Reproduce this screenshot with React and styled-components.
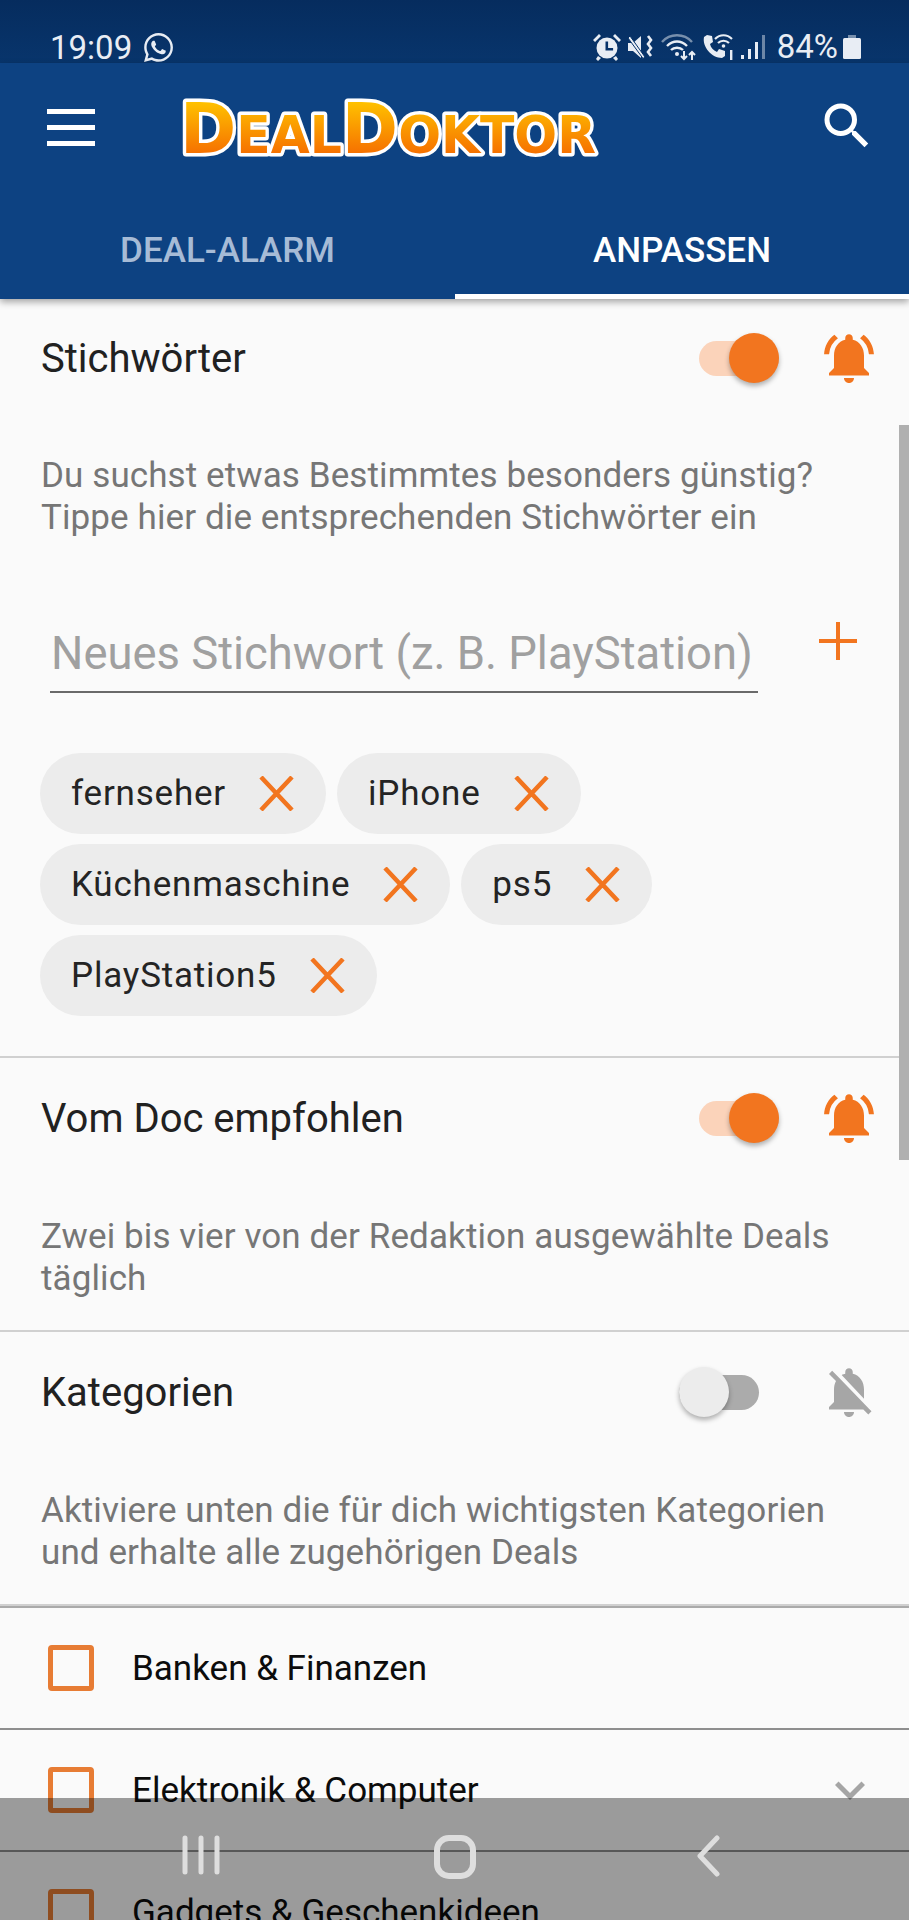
import React from "react";
import styled, { createGlobalStyle } from "styled-components";
import { FaWhatsapp } from "react-icons/fa";
import {
  MdKeyboardArrowDown,
  MdNotificationsActive,
  MdNotificationsOff,
  MdSearch,
} from "react-icons/md";

const orange = "#f2751f";

const GlobalStyle = createGlobalStyle`
  html, body {
    margin: 0;
    padding: 0;
    background: #fafafa;
  }
  * {
    box-sizing: border-box;
  }
`;

const Screen = styled.div`
  position: relative;
  width: 909px;
  height: 1920px;
  overflow: hidden;
  background: #fafafa;
  font-family: Roboto, "Liberation Sans", sans-serif;
`;

const StatusBar = styled.div`
  height: 63px;
  padding: 30px 48px 0 50px;
  display: flex;
  align-items: flex-start;
  background: linear-gradient(#062c5e, #08356c);
  color: #e8edf4;
`;

const Clock = styled.span`
  font-size: 33px;
  line-height: 36px;
  margin-right: 10px;
`;

const StatusIcons = styled.div`
  margin-left: auto;
  display: flex;
  align-items: center;
  height: 34px;
  gap: 5px;
`;

const Battery = styled.span`
  font-size: 33px;
  line-height: 34px;
  margin-left: 6px;
`;

const AppBar = styled.header`
  position: relative;
  z-index: 2;
  background: #0d4282;
  box-shadow: 0 3px 7px rgba(0, 0, 0, 0.35);
`;

const TopRow = styled.div`
  height: 152px;
  padding: 24px 32px 0 47px;
  display: flex;
  align-items: flex-start;
`;

const MenuButton = styled.div`
  width: 48px;
  margin-top: 22px;
  display: flex;
  flex-direction: column;
  gap: 11px;
  span {
    display: block;
    height: 5px;
    background: #fff;
  }
`;

const Logo = styled.svg`
  margin-left: 82px;
`;

const SearchButton = styled.div`
  margin-left: auto;
  margin-top: 9px;
  color: #fff;
  display: flex;
`;

const Tabs = styled.div`
  height: 84px;
  display: grid;
  grid-template-columns: 455px 454px;
`;

const Tab = styled.div`
  display: flex;
  align-items: center;
  justify-content: center;
  padding: 0 0 9px;
  font-size: 35px;
  font-weight: 500;
  color: ${(p) => (p.$active ? "#fff" : "#a6bbd6")};
  border-bottom: 5px solid ${(p) => (p.$active ? "#fff" : "transparent")};
`;

const Section = styled.section`
  padding-bottom: ${(p) => p.$bottom || 30}px;
  border-bottom: 2px solid #d0d0d0;
`;

const TitleRow = styled.div`
  height: ${(p) => p.$height || 120}px;
  padding: 0 30px 0 41px;
  display: flex;
  align-items: center;
`;

const Title = styled.div`
  font-size: 40px;
  color: #212121;
  flex: 1;
`;

const Toggle = styled.div`
  position: relative;
  width: 80px;
  height: 35px;
  margin-right: ${(p) => (p.$on ? "0" : "20px")};
  border-radius: 18px;
  background: ${(p) => (p.$on ? "#fbd3ba" : "#ababab")};
`;

const Thumb = styled.div`
  position: absolute;
  top: -8px;
  left: ${(p) => (p.$on ? "30px" : "0")};
  width: 50px;
  height: 50px;
  border-radius: 50%;
  background: ${(p) => (p.$on ? orange : "#ececec")};
  box-shadow: 0 3px 5px rgba(0, 0, 0, 0.3);
`;

const BellSlot = styled.div`
  width: 60px;
  margin-left: 40px;
  display: flex;
  color: ${(p) => (p.$on ? orange : "#a6a6a6")};
`;

const Description = styled.p`
  margin: 38px 0 0;
  padding: 0 30px 0 41px;
  font-size: 35px;
  line-height: 42px;
  letter-spacing: 0.1px;
  color: #767676;
`;

const InputRow = styled.div`
  margin-top: 88px;
  padding: 0 52px 0 50px;
  display: flex;
  align-items: flex-start;
  justify-content: space-between;
`;

const InputField = styled.div`
  width: 708px;
  height: 66px;
  padding-left: 1px;
  font-size: 45.4px;
  line-height: 54px;
  color: #a0a0a0;
  border-bottom: 2px solid #6a6a6a;
  white-space: nowrap;
`;

const PlusIcon = styled.svg`
  margin-top: -5px;
`;

const Chips = styled.div`
  margin-top: 60px;
  padding: 0 40px;
  display: flex;
  flex-wrap: wrap;
  gap: 10px 11px;
`;

const Chip = styled.div`
  height: 81px;
  padding: 0 32px 0 31px;
  display: flex;
  align-items: center;
  gap: 33px;
  border-radius: 41px;
  background: #ececec;
  font-size: 35px;
  letter-spacing: 0.8px;
  color: #242424;
`;

const ChipClose = styled.svg`
  flex: none;
`;

const CategoryList = styled.div`
  border-top: 2px solid #aaa;
`;

const CategoryRow = styled.div`
  height: 122px;
  padding: 0 29px 0 48px;
  display: flex;
  align-items: center;
  border-bottom: 2px solid #8e8e8e;
`;

const CheckBox = styled.div`
  width: 46px;
  height: 46px;
  border: 5px solid #e77c34;
  border-radius: 4px;
`;

const CategoryLabel = styled.div`
  margin-left: 38px;
  flex: 1;
  font-size: 35px;
  color: #0c0c0c;
`;

const Chevron = styled.span`
  display: flex;
  color: #a5a5a5;
`;

const ScrollBar = styled.div`
  position: absolute;
  top: 425px;
  right: 0;
  width: 10px;
  height: 735px;
  background: #b0b0b0;
`;

const NavBar = styled.nav`
  position: absolute;
  left: 0;
  right: 0;
  bottom: 0;
  height: 122px;
  padding: 37px 0 0 182px;
  display: flex;
  align-items: flex-start;
  gap: 214px;
  background: rgba(0, 0, 0, 0.38);
  color: #dedede;
`;

const BackIcon = styled.svg`
  margin-left: 6px;
`;

const keywords = ["fernseher", "iPhone", "Küchenmaschine", "ps5", "PlayStation5"];
const categories = [
  { name: "Banken & Finanzen" },
  { name: "Elektronik & Computer", expandable: true },
  { name: "Gadgets & Geschenkideen" },
];

const AlertSection = ({ title, on, height, bottom, children }) => (
  <Section $bottom={bottom}>
    <TitleRow $height={height}>
      <Title>{title}</Title>
      <Toggle $on={on}>
        <Thumb $on={on} />
      </Toggle>
      <BellSlot $on={on}>
        {on ? <MdNotificationsActive size={60} /> : <MdNotificationsOff size={60} />}
      </BellSlot>
    </TitleRow>
    {children}
  </Section>
);

const App = () => {
  return (
    <Screen>
      <GlobalStyle />
      <StatusBar>
        <Clock>19:09</Clock>
        <FaWhatsapp size={33} style={{ marginTop: 1 }} />
        <StatusIcons>
          <svg width="30" height="30" viewBox="0 0 30 30" fill="currentColor">
            <circle cx="15" cy="16" r="10.5" />
            <path d="M13.5 9.5h2.6v6.4h5v2.6h-7.6z" fill="#07336a" />
            <path d="M1 8l6-6 2 2-6 6zM29 8l-6-6-2 2 6 6zM6 24l3 2-3 3-2-2zM24 24l-3 2 3 3 2-2z" />
          </svg>
          <svg width="28" height="28" viewBox="0 0 28 28" fill="currentColor">
            <path d="M1 10h5l8-7v22l-8-7H1z" />
            <path d="M3 3l15 21-2 1.5L1 5z" stroke="#07336a" strokeWidth="1" />
            <path d="M21 3l3 4-3 4 3 4-3 4 3 4" fill="none" stroke="currentColor" strokeWidth="2.6" />
          </svg>
          <svg width="36" height="30" viewBox="0 0 36 30" fill="none" stroke="currentColor">
            <path d="M2 10c8-9 22-9 30 0" strokeOpacity="0.5" strokeWidth="2.4" />
            <path d="M7 14c6-6 14-6 20 0M11 18c3-3 9-3 12 0" strokeWidth="2.4" />
            <circle cx="17" cy="22" r="2" fill="currentColor" stroke="none" />
            <path d="M24 19v8M21 24l3 3 3-3M32 28v-8M29 23l3-3 3 3" strokeWidth="2" />
          </svg>
          <svg width="34" height="30" viewBox="0 0 34 30" fill="currentColor">
            <path d="M6 3l5 1 1 6-3 2c1 4 3 6 7 8l2-3 6 2v5l-3 2C11 26 1 15 3 5z" />
            <path d="M14 7c5-5 12-5 17 0M17 11c3-3 8-3 11 0" fill="none" stroke="currentColor" strokeWidth="2.2" />
            <circle cx="22.5" cy="14" r="1.8" />
            <path d="M29 18h2.4v10H29z" />
          </svg>
          <svg width="26" height="28" viewBox="0 0 26 28" fill="currentColor">
            <rect x="1" y="22" width="3" height="4" />
            <rect x="8" y="16" width="3" height="10" />
            <rect x="15" y="9" width="3" height="17" />
            <rect x="22" y="2" width="3" height="24" opacity="0.45" />
          </svg>
          <Battery>84%</Battery>
          <svg width="18" height="24" viewBox="0 0 18 24" fill="currentColor">
            <rect x="5" y="0" width="8" height="3" opacity="0.5" />
            <rect x="0" y="3" width="18" height="21" rx="1.5" />
          </svg>
        </StatusIcons>
      </StatusBar>

      <AppBar>
        <TopRow>
          <MenuButton>
            <span />
            <span />
            <span />
          </MenuButton>
          <Logo width="424" height="84" viewBox="0 0 424 84">
            <defs>
              <linearGradient id="logoFill" x1="0" y1="0" x2="0" y2="1">
                <stop offset="0.15" stopColor="#ffc400" />
                <stop offset="0.85" stopColor="#f56a00" />
              </linearGradient>
            </defs>
            <text
              x="3"
              y="66"
              textLength="416"
              lengthAdjust="spacingAndGlyphs"
              fontFamily="'DejaVu Sans', sans-serif"
              fontWeight="700"
              fill="url(#logoFill)"
              stroke="#fff"
              strokeWidth="7"
              strokeLinejoin="round"
              paintOrder="stroke"
            >
              <tspan fontSize="70">D</tspan>
              <tspan fontSize="52">EAL</tspan>
              <tspan fontSize="70">D</tspan>
              <tspan fontSize="52">OKTOR</tspan>
            </text>
          </Logo>
          <SearchButton>
            <MdSearch size={60} />
          </SearchButton>
        </TopRow>
        <Tabs>
          <Tab>DEAL-ALARM</Tab>
          <Tab $active>ANPASSEN</Tab>
        </Tabs>
      </AppBar>

      <AlertSection title="Stichwörter" on height={118} bottom={40}>
        <Description>
          Du suchst etwas Bestimmtes besonders günstig?
          <br />
          Tippe hier die entsprechenden Stichwörter ein
        </Description>
        <InputRow>
          <InputField>Neues Stichwort (z. B. PlayStation)</InputField>
          <PlusIcon width="38" height="38" viewBox="0 0 38 38" stroke={orange} strokeWidth="4">
            <path d="M19 0v38M0 19h38" />
          </PlusIcon>
        </InputRow>
        <Chips>
          {keywords.map((word) => (
            <Chip key={word}>
              {word}
              <ChipClose width="35" height="35" viewBox="0 0 35 35" stroke={orange} strokeWidth="4.5">
                <path d="M2 1l31 33M33 1L2 34" />
              </ChipClose>
            </Chip>
          ))}
        </Chips>
      </AlertSection>

      <AlertSection title="Vom Doc empfohlen" on>
        <Description>Zwei bis vier von der Redaktion ausgewählte Deals täglich</Description>
      </AlertSection>

      <AlertSection title="Kategorien">
        <Description>
          Aktiviere unten die für dich wichtigsten Kategorien und erhalte alle zugehörigen Deals
        </Description>
      </AlertSection>

      <CategoryList>
        {categories.map((cat) => (
          <CategoryRow key={cat.name}>
            <CheckBox />
            <CategoryLabel>{cat.name}</CategoryLabel>
            {cat.expandable && (
              <Chevron>
                <MdKeyboardArrowDown size={60} />
              </Chevron>
            )}
          </CategoryRow>
        ))}
      </CategoryList>

      <ScrollBar />

      <NavBar>
        <svg width="38" height="40" viewBox="0 0 38 40" stroke="currentColor" strokeWidth="5" strokeLinecap="round">
          <path d="M3 3v34M19 3v34M35 3v34" />
        </svg>
        <svg width="42" height="44" viewBox="0 0 42 44" fill="none" stroke="currentColor" strokeWidth="6">
          <rect x="3" y="3" width="36" height="38" rx="12" />
        </svg>
        <BackIcon width="24" height="42" viewBox="0 0 24 42" fill="none" stroke="currentColor" strokeWidth="5" strokeLinecap="round" strokeLinejoin="round">
          <path d="M21 3L4 21l17 18" />
        </BackIcon>
      </NavBar>
    </Screen>
  );
};

export default App;
